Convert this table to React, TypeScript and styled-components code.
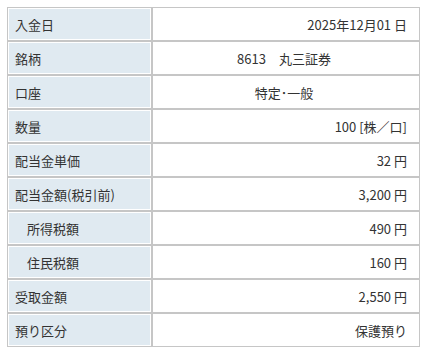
import React from 'react';
import styled, { createGlobalStyle } from 'styled-components';

const GlobalStyle = createGlobalStyle`
    body {
        margin: 0;
        padding: 7px;
        background: #ffffff;
        font-family: 'Noto Sans CJK JP', 'Noto Sans', sans-serif;
    }
`;

type Align = 'right' | 'center';

interface IRow {
    label: string;
    value: string;
    indent?: boolean;
    align?: Align;
}

const rows: IRow[] = [
    { label: '入金日', value: '2025年12月01 日' },
    { label: '銘柄', value: '8613\u3000丸三証券', align: 'center' },
    { label: '口座', value: '特定･一般', align: 'center' },
    { label: '数量', value: '100 [株／口]' },
    { label: '配当金単価', value: '32 円' },
    { label: '配当金額(税引前)', value: '3,200 円' },
    { label: '所得税額', value: '490 円', indent: true },
    { label: '住民税額', value: '160 円', indent: true },
    { label: '受取金額', value: '2,550 円' },
    { label: '預り区分', value: '保護預り' },
];

const App = () => {
    return (
        <>
            <GlobalStyle />
            <StTable>
                <tbody>
                    {rows.map((row) => (
                        <tr key={row.label}>
                            <StLabel $indent={row.indent}>{row.label}</StLabel>
                            <StValue $align={row.align || 'right'}>
                                {row.value}
                            </StValue>
                        </tr>
                    ))}
                </tbody>
            </StTable>
        </>
    );
};

const StTable = styled.table`
    width: 413px;
    border-collapse: separate;
    border-spacing: 0;
    font-size: 13px;
    color: #333333;
    table-layout: fixed;
`;

const StLabel = styled.th<{ $indent?: boolean }>`
    width: 145px;
    height: 34px;
    padding: 0 0 0 ${({ $indent }) => ($indent ? '19px' : '7px')};
    box-sizing: border-box;
    text-align: left;
    font-weight: normal;
    white-space: nowrap;
    background: #e0eaf1;
    border: 1px solid #c6c6c6;
    box-shadow: inset 1px 1px 0 #ffffff, inset -1px -1px 0 #ffffff;
`;

const StValue = styled.td<{ $align: Align }>`
    height: 34px;
    padding: 0 12px 0 8px;
    box-sizing: border-box;
    text-align: ${({ $align }) => $align};
    white-space: nowrap;
    background: #ffffff;
    border: 1px solid #c6c6c6;
`;

export default App;
